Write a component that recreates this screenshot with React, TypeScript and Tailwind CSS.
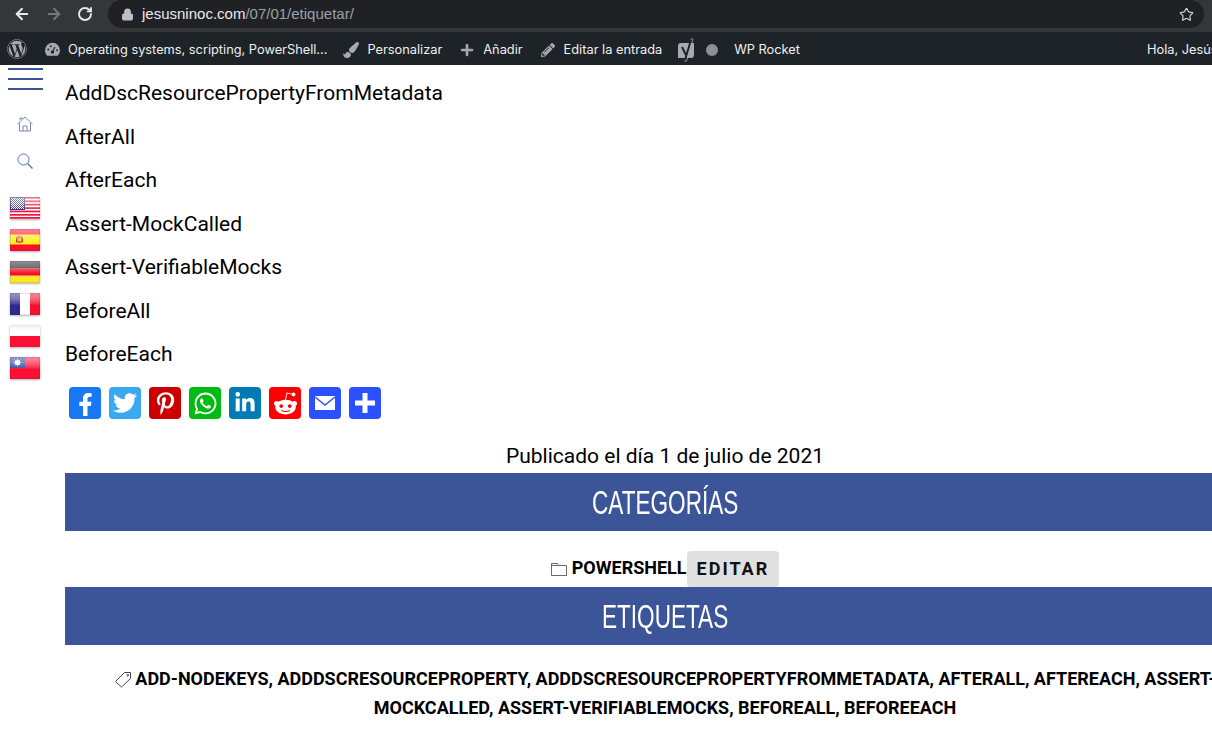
import React from "react";
import { ArrowLeft, ArrowRight, RotateCw, Lock, Star } from "lucide-react";
import { FaWordpress, FaPaintBrush, FaPlus, FaPencilAlt, FaFacebookF, FaTwitter, FaPinterestP, FaWhatsapp, FaLinkedinIn, FaRedditAlien } from "react-icons/fa";

const items = ["AddDscResourcePropertyFromMetadata", "AfterAll", "AfterEach", "Assert-MockCalled", "Assert-VerifiableMocks", "BeforeAll", "BeforeEach"];

const Gloss = () => (
  <>
    <rect x="0" y="0" width="30" height="22" fill="url(#gloss)" />
    <rect x="0.5" y="0.5" width="29" height="21" fill="none" stroke="#000" strokeOpacity="0.1" />
  </>
);

const flagClass = "block w-[30px] h-[22px] drop-shadow-[0_1px_1px_rgba(0,0,0,0.3)]";

const FlagUS = () => (
  <svg viewBox="0 0 30 22" className={flagClass}>
    <rect width="30" height="22" fill="#fff" />
    {[0, 3.4, 6.8, 10.2, 13.6, 17, 20].map((y) => (
      <rect key={y} y={y} width="30" height="1.7" fill="#f0143c" />
    ))}
    <rect width="15" height="13" fill="#2f2d8e" />
    {[1, 2, 3, 4, 5, 6, 7, 8, 9, 10, 11, 12, 13].map((x) =>
      [1, 2, 3, 4, 5, 6, 7, 8, 9, 10, 11].map((y) =>
        (x + y) % 2 === 0 ? <rect key={`${x}-${y}`} x={x} y={y} width="1" height="1" fill="#fff" /> : null
      )
    )}
    <Gloss />
  </svg>
);
const FlagES = () => (
  <svg viewBox="0 0 30 22" className={flagClass}>
    <rect width="30" height="22" fill="#fb0f2b" />
    <rect y="5.5" width="30" height="10" fill="#fff01e" />
    <rect x="6" y="7" width="7" height="7" rx="2" fill="#d9703a" />
    <rect x="7" y="6" width="5" height="2" fill="#f0b040" />
    <rect x="8" y="9" width="3" height="3" fill="#e8c860" />
    <rect x="6" y="10" width="1" height="3" fill="#c03030" />
    <rect x="12" y="10" width="1" height="3" fill="#c03030" />
    <Gloss />
  </svg>
);
const FlagDE = () => (
  <svg viewBox="0 0 30 22" className={flagClass}>
    <rect width="30" height="7.4" fill="#222" />
    <rect y="7.4" width="30" height="7.3" fill="#f5102a" />
    <rect y="14.7" width="30" height="7.3" fill="#fde725" />
    <Gloss />
  </svg>
);
const FlagFR = () => (
  <svg viewBox="0 0 30 22" className={flagClass}>
    <rect width="10" height="22" fill="#2f2a8c" />
    <rect x="10" width="10" height="22" fill="#fff" />
    <rect x="20" width="10" height="22" fill="#f5102f" />
    <Gloss />
  </svg>
);
const FlagPL = () => (
  <svg viewBox="0 0 30 22" className={flagClass}>
    <rect width="30" height="11" fill="#fff" />
    <rect y="11" width="30" height="11" fill="#fb1035" />
    <rect width="30" height="22" fill="url(#gloss2)" />
  </svg>
);
const FlagTW = () => (
  <svg viewBox="0 0 30 22" className={flagClass}>
    <rect width="30" height="22" fill="#fb1035" />
    <rect width="15" height="11" fill="#2a3f9c" />
    <Gloss />
    <circle cx="7.5" cy="5.500" r="2.600" fill="#fff" />
    <path d="M7.500 1.500v8M3.500 5.500h8M4.700 2.700l5.600 5.600M10.300 2.700L4.700 8.300" stroke="#fff" strokeWidth="0.7" />
  </svg>
);

const Share = ({ bg, children }: { bg: string; children: React.ReactNode }) => (
  <div className={`w-8 h-8 rounded flex items-center justify-center text-white ${bg}`}>{children}</div>
);

const AdminItem = ({ icon, label, className }: { icon: React.ReactNode; label: string; className: string }) => (
  <div className={`flex items-center ${className}`}>
    {icon}
    <span>{label}</span>
  </div>
);

export default function App() {
  return (
    <div className="w-[1212px] h-[735px] overflow-hidden bg-white flex flex-col font-['Roboto',sans-serif] text-black">
      <svg width="0" height="0" className="absolute">
        <defs>
          <linearGradient id="gloss" x1="0" y1="0" x2="0" y2="1">
            <stop offset="0" stopColor="#fff" stopOpacity="0.5" />
            <stop offset="0.25" stopColor="#fff" stopOpacity="0.38" />
            <stop offset="0.5" stopColor="#fff" stopOpacity="0.12" />
            <stop offset="0.55" stopColor="#fff" stopOpacity="0" />
            <stop offset="1" stopColor="#fff" stopOpacity="0" />
          </linearGradient>
          <linearGradient id="gloss2" x1="0" y1="0" x2="0" y2="1">
            <stop offset="0" stopColor="#e8e8e8" stopOpacity="1" />
            <stop offset="0.3" stopColor="#fff" stopOpacity="0" />
          </linearGradient>
        </defs>
      </svg>

      {/* browser toolbar */}
      <div className="h-8 shrink-0 bg-[#35363a] flex items-start font-['Liberation_Sans',sans-serif]">
        <div className="w-[108px] h-7 flex items-center pl-[13px] gap-[14px]">
          <ArrowLeft size={18} strokeWidth={2.6} className="text-[#e8eaed]" />
          <ArrowRight size={18} strokeWidth={2.4} className="text-[#77787b]" />
          <RotateCw size={16} strokeWidth={2.8} className="text-[#e8eaed]" />
        </div>
        <div className="w-[1096px] h-7 rounded-full bg-[#202124] flex items-center pl-[13px] pr-[10px]">
          <Lock size={13} className="text-[#bdc1c6] fill-[#bdc1c6] mr-[8px]" />
          <span className="text-[15px] text-[#e8eaed]">jesusninoc.com</span>
          <span className="text-[15px] text-[#9aa0a6]">/07/01/etiquetar/</span>
          <Star size={15} strokeWidth={1.8} className="ml-auto text-[#d5d7da]" />
        </div>
      </div>

      {/* wp admin bar */}
      <div className="h-[33px] shrink-0 bg-[#1d2327] flex items-center pt-[2px] text-[12.8px] text-[#f0f0f1] whitespace-nowrap font-['Inter',sans-serif]">
        <FaWordpress size={20} className="ml-[7px] text-[#a7aaad] -translate-y-px" />
        <AdminItem
          className="ml-[17px]"
          icon={
            <svg width="17" height="15" viewBox="0 0 20 18" className="mr-[7px]">
              <path d="M10 1a9 9 0 0 0-9 9c0 2.600 1 5 2.700 6.600h12.600A9 9 0 0 0 19 10a9 9 0 0 0-9-9z" fill="#a7aaad" />
              <circle cx="10" cy="12" r="2" fill="#1d2327" />
              <path d="M10 12l3-6" stroke="#1d2327" strokeWidth="1.4" />
              <circle cx="5" cy="9" r="1.2" fill="#1d2327" />
              <circle cx="15.5" cy="10" r="1.2" fill="#1d2327" />
              <circle cx="8" cy="5" r="1.2" fill="#1d2327" />
            </svg>
          }
          label="Operating systems, scripting, PowerShell..."
        />
        <AdminItem className="ml-[16px]" icon={<FaPaintBrush size={16} className="text-[#a7aaad] mr-[8px]" />} label="Personalizar" />
        <AdminItem className="ml-[18px]" icon={<FaPlus size={14} className="text-[#a7aaad] mr-[9px]" />} label="Añadir" />
        <AdminItem className="ml-[18px]" icon={<FaPencilAlt size={14} className="text-[#a7aaad] mr-[9px]" />} label="Editar la entrada" />
        <svg width="20" height="24" viewBox="0 0 20 24" className="ml-[15px]">
          <path d="M4 5h13v12a3 3 0 0 1-3 3H1V8a3 3 0 0 1 3-3z" fill="#a7aaad" />
          <path d="M5 9l4 8M14 2L8 22" fill="none" stroke="#1d2327" strokeWidth="2" />
          <path d="M13.500 1H16L9.500 23H7" fill="none" stroke="#a7aaad" strokeWidth="0.8" />
        </svg>
        <span className="ml-[9px] w-3 h-3 rounded-full bg-[#8c8f94]" />
        <span className="ml-[16px]">WP Rocket</span>
        <span className="ml-auto w-[65px] shrink-0 overflow-hidden">Hola, Jesús</span>
      </div>

      {/* page */}
      <div className="flex-1 flex min-h-0">
        <aside className="w-[65px] shrink-0 flex flex-col items-start">
          <div className="w-[35px] flex flex-col gap-[8px] ml-2 mt-[3px]">
            <div className="h-0.5 bg-[#3b5598]" />
            <div className="h-0.5 bg-[#3b5598]" />
            <div className="h-0.5 bg-[#3b5598]" />
          </div>
          <svg width="16" height="16" viewBox="0 0 16 16" fill="none" stroke="#3b5598" strokeOpacity="0.75" strokeWidth="0.9" className="mt-[26px] ml-[17px]">
            <path d="M0.500 8L8 1l7.500 7M2.500 7v8h11V7M6 15v-5h4v5M3 4V2h2v1" />
          </svg>
          <svg width="16" height="16" viewBox="0 0 16 16" fill="none" stroke="#3b5598" strokeOpacity="0.8" strokeWidth="1" className="mt-[21px] ml-[17px]">
            <circle cx="6.500" cy="6.500" r="5.500" />
            <path d="M10.500 10.500l5 5" strokeWidth="1.5" />
          </svg>
          <div className="mt-[28px] ml-[10px] flex flex-col gap-[10px]">
            <FlagUS />
            <FlagES />
            <FlagDE />
            <FlagFR />
            <FlagPL />
            <FlagTW />
          </div>
        </aside>

        <main className="w-[1200px] shrink-0">
          <div className="flex flex-col gap-[15.5px] text-[21px] leading-[28px] pt-[14px]">
            {items.map((t) => (
              <p key={t}>{t}</p>
            ))}
          </div>
          <div className="flex gap-2 ml-1 mt-[19px]">
            <Share bg="bg-[#1877f2]"><FaFacebookF size={23} className="translate-y-[1px]" /></Share>
            <Share bg="bg-[#3ba9f2]"><FaTwitter size={24} /></Share>
            <Share bg="bg-[#cc0000]"><FaPinterestP size={23} /></Share>
            <Share bg="bg-[#00bb11]"><FaWhatsapp size={25} /></Share>
            <Share bg="bg-[#007bb5]"><FaLinkedinIn size={22} /></Share>
            <Share bg="bg-[#ff0000]"><FaRedditAlien size={25} /></Share>
            <Share bg="bg-[#2a50ff]">
              <svg width="22" height="14" viewBox="0 0 22 14">
                <rect width="20" height="14" x="1" fill="#fff" />
                <path d="M1 1l10 8 10-8" fill="none" stroke="#2a50ff" strokeWidth="1.4" />
              </svg>
            </Share>
            <Share bg="bg-[#2a50ff]">
              <svg width="22" height="22" viewBox="0 0 22 22">
                <path d="M8.500 1h5v7.500H21v5h-7.500V21h-5v-7.500H1v-5h7.500z" fill="#fff" />
              </svg>
            </Share>
          </div>
          <p className="text-center text-[21px] leading-[28px] mt-[23px]">Publicado el día 1 de julio de 2021</p>
          <h2 className="h-[58px] mt-[3px] bg-[#3b5598] text-white flex items-center justify-center font-['Liberation_Sans',sans-serif]">
            <span className="inline-block text-[34px] scale-x-[0.664] whitespace-nowrap">CATEGORÍAS</span>
          </h2>
          <div className="h-[56px] flex items-end justify-center font-bold text-[18px]">
            <div className="flex items-center h-9 pb-[3px]">
              <svg width="16" height="14" viewBox="0 0 16 14" fill="none" stroke="#444" strokeWidth="0.8" className="mr-[5px] mt-[2px]">
                <path d="M0.500 13.500V1.500h6l1 2h8v10zM0.500 3.500h7" />
              </svg>
              POWERSHELL
            </div>
            <div className="h-9 px-[10px] pb-[2px] bg-[#e0e0e0] rounded flex items-center tracking-[2px] text-[#111]">EDITAR</div>
          </div>
          <h2 className="h-[58px] bg-[#3b5598] text-white flex items-center justify-center font-['Liberation_Sans',sans-serif]">
            <span className="inline-block text-[34px] scale-x-[0.664] whitespace-nowrap">ETIQUETAS</span>
          </h2>
          <p className="pt-[19px] text-center font-bold text-[18px] leading-[29px]">
            <svg width="18" height="17" viewBox="0 0 18 17" fill="none" stroke="#333" strokeWidth="0.9" className="inline mr-[3px] align-[-3px]">
              <path d="M1.500 10.500L10.500 1.500H16.500V7.500L7.500 16zM13.700 3.500a.8.8 0 1 0 .1 0z" />
            </svg>
            ADD-NODEKEYS, ADDDSCRESOURCEPROPERTY, ADDDSCRESOURCEPROPERTYFROMMETADATA, AFTERALL, AFTEREACH, ASSERT-MOCKCALLED, ASSERT-VERIFIABLEMOCKS, BEFOREALL, BEFOREEACH
          </p>
        </main>
      </div>
    </div>
  );
}
